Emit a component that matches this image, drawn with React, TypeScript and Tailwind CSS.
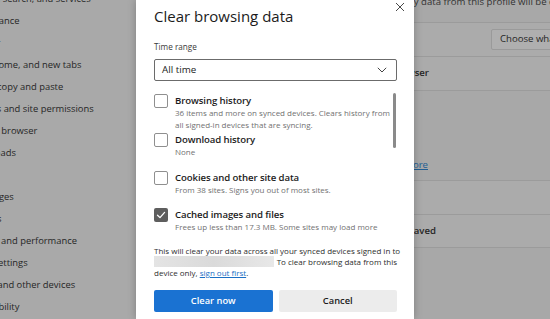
import React from 'react'

const sidebarItems = [
    'Privacy, search, and services',
    'Appearance',
    'Sidebar',
    'Start, home, and new tabs',
    'Share, copy and paste',
    'Cookies and site permissions',
    'Default browser',
    'Downloads',
    'Family',
    'Languages',
    'Printers',
    'System and performance',
    'Reset settings',
    'Phone and other devices',
    'Accessibility',
]

function Checkbox({ checked }: { checked?: boolean }) {
    if (checked) {
        return (
            <div className="w-[14px] h-[14px] shrink-0 rounded-[2px] bg-[#5e5e5e] flex items-center justify-center">
                <svg width="10" height="10" viewBox="0 0 10 10" fill="none">
                    <path d="M1.5 5.2 L4 7.6 L8.6 2.4" stroke="white" strokeWidth="1.3" strokeLinecap="round" strokeLinejoin="round" />
                </svg>
            </div>
        )
    }
    return <div className="w-[14px] h-[14px] shrink-0 rounded-[2px] border border-[#8f8f8f] bg-white" />
}

function Option({ title, lines, checked, className = '' }: { title: string; lines: string[]; checked?: boolean; className?: string }) {
    return (
        <div className={`flex gap-[7px] ${className}`}>
            <Checkbox checked={checked} />
            <div className="flex flex-col">
                <div className="text-[9.6px] leading-[14px] font-semibold tracking-[-0.1px] text-[#1b1b1b] whitespace-nowrap">{title}</div>
                <div className="-mt-[1px]">
                    {lines.map((l) => (
                        <div key={l} className="text-[8px] leading-[12px] text-[#717171] whitespace-nowrap">{l}</div>
                    ))}
                </div>
            </div>
        </div>
    )
}

export default function App() {
    return (
        <div className="relative w-[550px] h-[319px] overflow-hidden flex bg-[#a9a9a9] font-['Open_Sans',sans-serif]">
            {/* settings page behind the dimmed overlay */}
            <div className="w-[414px] shrink-0 overflow-hidden">
                <div className="-mt-[12px] -ml-[33px]">
                    {sidebarItems.map((item) => (
                        <div key={item} className="h-[22px] flex items-center text-[9.4px] text-[#262626] whitespace-nowrap">
                            {item}
                        </div>
                    ))}
                </div>
            </div>
            <div className="flex-1 overflow-hidden bg-[#a8a8a8] text-[9.6px] text-[#262626]">
                <div className="h-[28px] border-b border-[#9b9b9b]">
                    <div className="-mt-[5px] -ml-[16px] whitespace-nowrap text-[#333]">Only data from this profile will be deleted.</div>
                </div>
                <div className="h-[34px] border-b border-[#9b9b9b] bg-[#ababab] flex items-center pl-[77px]">
                    <div className="h-[21px] px-[8px] flex items-center rounded-[2px] border border-[#9a9a9a] bg-[#afafaf] whitespace-nowrap">
                        Choose what to clear
                    </div>
                </div>
                <div className="h-[34px] border-b border-[#9b9b9b] bg-[#ababab] flex items-center">
                    <div className="w-[15px] flex justify-end whitespace-nowrap font-semibold">Choose what to clear every time you close the browser</div>
                </div>
                <div className="h-[90px] border-b border-[#9b9b9b] flex items-end pb-[8px]">
                    <div className="w-[14px] flex justify-end whitespace-nowrap text-[#225e93] underline">Learn more</div>
                </div>
                <div className="h-[34px] border-b border-[#9b9b9b] bg-[#ababab]" />
                <div className="h-[33px] border-b border-[#9b9b9b] bg-[#ababab] flex items-center">
                    <div className="w-[22px] flex justify-end whitespace-nowrap font-semibold">Passwords saved</div>
                </div>
            </div>

            {/* dialog */}
            <div className="absolute left-[136px] top-0 w-[278px] h-[319px] bg-white shadow-[0_0_8px_rgba(0,0,0,0.25)] pl-[18px] pr-[17px]">
                <button className="absolute right-[8px] top-[1px] w-[12px] h-[12px] flex items-center justify-center">
                    <svg width="10" height="10" viewBox="0 0 10 10">
                        <path d="M1 1 L9 9 M9 1 L1 9" stroke="#4a4a4a" strokeWidth="1" />
                    </svg>
                </button>
                <div className="pt-[6px] h-[26px] text-[15px] leading-[20px] text-[#1b1b1b] whitespace-nowrap">Clear browsing data</div>
                <div className="mt-[15px] h-[12px] text-[8.2px] leading-[12px] text-[#3a3a3a]">Time range</div>
                <div className="mt-[6px] h-[22px] border border-[#6b6b6b] rounded-[2px] flex items-center justify-between pl-[7px] pr-[9px]">
                    <span className="text-[9.8px] text-[#1b1b1b]">All time</span>
                    <svg width="10" height="6" viewBox="0 0 10 6" fill="none">
                        <path d="M0.8 0.8 L5 5 L9.2 0.8" stroke="#444" strokeWidth="1" />
                    </svg>
                </div>
                <div className="relative mt-[13px]">
                    <div className="absolute right-[1px] top-[-1px] w-[3px] h-[55px] rounded-full bg-[#8a8a8a]" />
                    <Option
                        title="Browsing history"
                        lines={['36 items and more on synced devices. Clears history from', 'all signed-in devices that are syncing.']}
                    />
                    <Option className="mt-[2px]" title="Download history" lines={['None']} />
                    <Option className="mt-[13px]" title="Cookies and other site data" lines={['From 38 sites. Signs you out of most sites.']} />
                    <Option className="mt-[12px]" checked title="Cached images and files" lines={['Frees up less than 17.3 MB. Some sites may load more']} />
                </div>
                <div className="mt-[12px] text-[8px] leading-[11px] text-[#2e2e2e] whitespace-nowrap">
                    <div>This will clear your data across all your synced devices signed in to</div>
                    <div className="flex items-center">
                        <span className="inline-block w-[123px] h-[11px] bg-gradient-to-r from-[#e4e4e4] via-[#dadada] to-[#e8e8e8] mr-[3px]" />
                        <span>To clear browsing data from this</span>
                    </div>
                    <div>
                        device only, <span className="text-[#1a6fc4] underline">sign out first</span>.
                    </div>
                </div>
                <div className="mt-[12px] flex gap-[6px]">
                    <button className="flex-1 h-[22px] rounded-[2px] bg-[#1a72d2] text-white text-[9.3px] font-semibold">Clear now</button>
                    <button className="flex-1 h-[22px] rounded-[2px] bg-[#ececec] text-[#1b1b1b] text-[9.3px] font-semibold">Cancel</button>
                </div>
            </div>
        </div>
    )
}
